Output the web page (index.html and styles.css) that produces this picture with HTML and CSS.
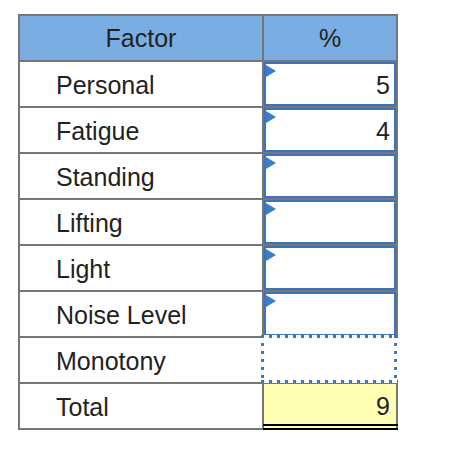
FILE: index.html
```html
<!DOCTYPE html>
<html>
<head>
<meta charset="utf-8">
<link rel="stylesheet" href="styles.css">
</head>
<body>
<div class="sheet">
  <div class="cell head">Factor</div>
  <div class="cell head">%</div>

  <div class="cell label">Personal</div>
  <div class="cell input num">5</div>

  <div class="cell label">Fatigue</div>
  <div class="cell input num">4</div>

  <div class="cell label">Standing</div>
  <div class="cell input num"></div>

  <div class="cell label">Lifting</div>
  <div class="cell input num"></div>

  <div class="cell label">Light</div>
  <div class="cell input num"></div>

  <div class="cell label">Noise Level</div>
  <div class="cell input num"></div>

  <div class="cell label">Monotony</div>
  <div class="cell num selected"><span class="marquee"></span></div>

  <div class="cell label">Total</div>
  <div class="cell num total">9</div>
</div>
</body>
</html>
```
FILE: styles.css
```css
html, body {
  margin: 0;
  padding: 0;
  background: #ffffff;
}

body {
  font-family: "Liberation Sans", Arial, sans-serif;
  color: #222222;
}

.sheet {
  display: grid;
  grid-template-columns: 242px 132px;
  grid-auto-rows: 44px;
  gap: 2px;
  padding: 2px;
  width: max-content;
  margin: 14px 0 0 18px;
  background: #767676;
}

.cell {
  position: relative;
  display: flex;
  align-items: center;
  background: #ffffff;
  font-size: 25px;
  line-height: 28px;
}

.head {
  justify-content: center;
  background: #7aaee2;
}

.label {
  padding-left: 36px;
  padding-top: 1px;
}

.num {
  justify-content: flex-end;
  padding-right: 6px;
}

.input {
  box-shadow: inset 0 0 0 2px #3b74bb;
  padding-top: 1px;
}

.input::before {
  content: "";
  position: absolute;
  left: 2px;
  top: 3px;
  width: 10px;
  height: 12px;
  background: #3d7cc9;
  clip-path: polygon(0 0, 100% 50%, 0 100%);
}

.marquee {
  position: absolute;
  left: -3px;
  top: -3px;
  width: 137px;
  height: 48px;
  background-color: #ffffff;
  background-image:
    radial-gradient(circle at 1.5px 1.5px, #3a76c4 1.5px, rgba(58, 118, 196, 0) 2px),
    radial-gradient(circle at 1.5px 1.5px, #3a76c4 1.5px, rgba(58, 118, 196, 0) 2px),
    radial-gradient(circle at 1.5px 1.5px, #3a76c4 1.5px, rgba(58, 118, 196, 0) 2px),
    radial-gradient(circle at 1.5px 1.5px, #3a76c4 1.5px, rgba(58, 118, 196, 0) 2px);
  background-size: 8px 3px, 8px 3px, 3px 8px, 3px 8px;
  background-position: left 0 top 0, left 0 bottom 0, left 0 top 0, right 1px top 0;
  background-repeat: repeat-x, repeat-x, repeat-y, repeat-y;
}

.total {
  background: #ffffb3;
}

.total::after {
  content: "";
  position: absolute;
  left: -1px;
  right: -2px;
  bottom: -2px;
  height: 2px;
  border-top: 2px solid #000000;
  border-bottom: 2px solid #000000;
}
```
